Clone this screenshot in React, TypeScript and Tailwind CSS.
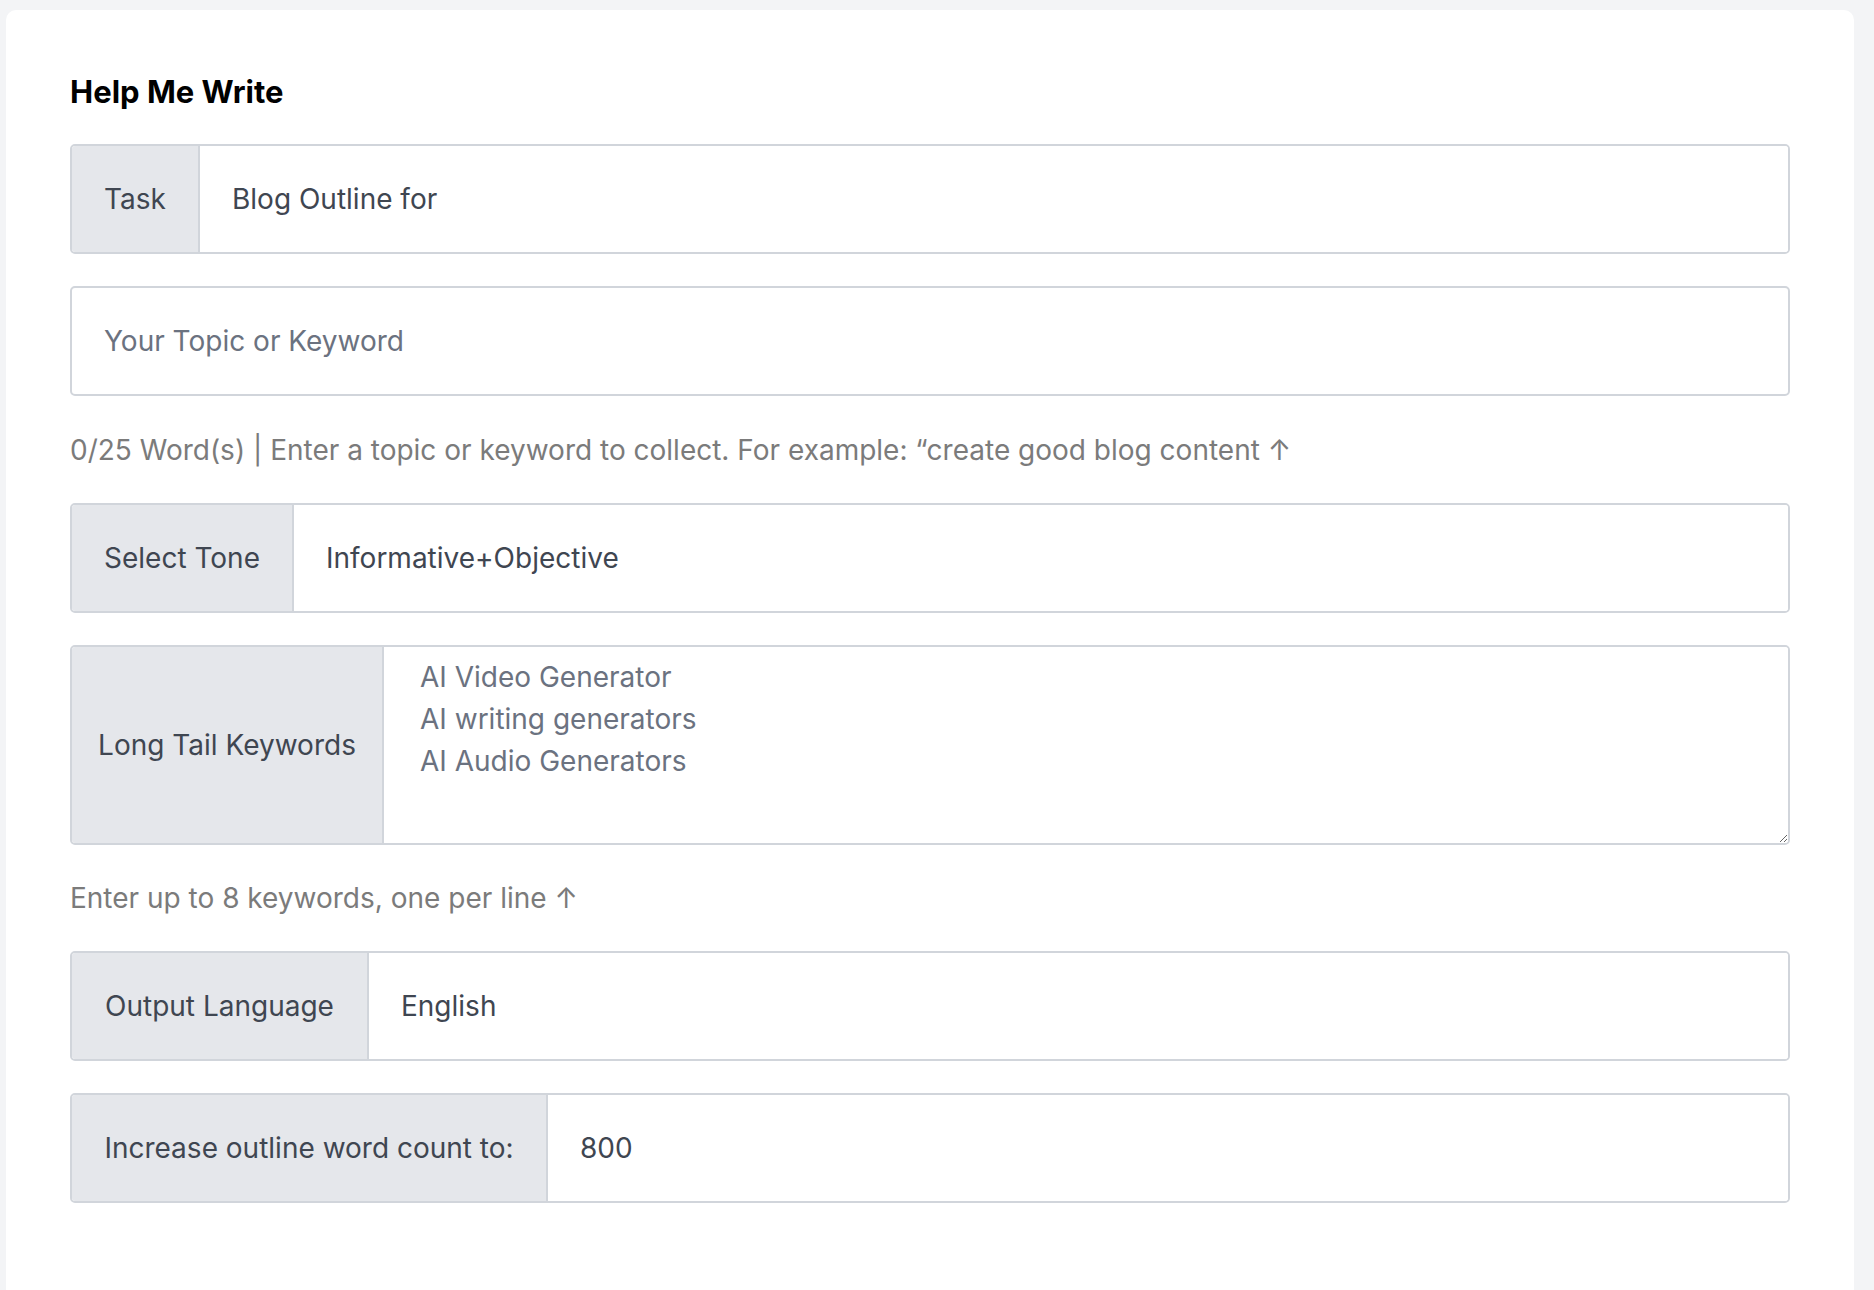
import { ReactNode } from "react";

const font = { fontFamily: "Inter, 'Noto Sans', sans-serif" };

function Row({
  label,
  labelWidth,
  children,
  tall,
}: {
  label: string;
  labelWidth: string;
  children: ReactNode;
  tall?: boolean;
}) {
  return (
    <div
      className={`flex rounded-[5px] border-2 border-[#d1d5db] overflow-hidden ${
        tall ? "h-[200px]" : "h-[110px]"
      }`}
    >
      <div
        className={`${labelWidth} shrink-0 flex items-center justify-center bg-[#e5e7eb] border-r-2 border-[#d1d5db] text-[28px] text-[#3f4651]`}
      >
        {label}
      </div>
      <div className="flex-1 flex bg-white">{children}</div>
    </div>
  );
}

export default function App() {
  return (
    <div className="min-h-screen bg-[#f3f4f6] pl-[6px] pr-[20px] pt-[10px]" style={font}>
      <div className="bg-white rounded-[10px] min-h-[1290px] px-[64px] pt-[64px]">
        <h1 className="text-[31px] font-bold text-black leading-[36px]">Help Me Write</h1>

        <div className="mt-[34px] flex flex-col">
          <Row label="Task" labelWidth="w-[128px]">
            <input
              className="flex-1 px-[32px] text-[28px] text-[#3f4651] outline-none"
              defaultValue="Blog Outline for"
            />
          </Row>

          <div className="mt-[32px] h-[110px] rounded-[5px] border-2 border-[#d1d5db] flex">
            <input
              className="flex-1 px-[32px] text-[28px] text-[#3f4651] placeholder:text-[#6b7280] outline-none rounded-[5px]"
              placeholder="Your Topic or Keyword"
            />
          </div>

          <p className="mt-[36px] text-[28px] text-[#7b7b7b] leading-[36px]">
            0/25 Word(s) | Enter a topic or keyword to collect. For example: “create good blog content ↑
          </p>

          <div className="mt-[35px]">
            <Row label="Select Tone" labelWidth="w-[222px]">
              <input
                className="flex-1 px-[32px] text-[28px] text-[#3f4651] outline-none"
                defaultValue="Informative+Objective"
              />
            </Row>
          </div>

          <div className="mt-[32px]">
            <Row label="Long Tail Keywords" labelWidth="w-[312px]" tall>
              <textarea
                className="flex-1 px-[36px] py-[9px] text-[28px] leading-[42px] text-[#3f4651] placeholder:text-[#6b7280] outline-none"
                placeholder={"AI Video Generator\nAI writing generators\nAI Audio Generators"}
              />
            </Row>
          </div>

          <p className="mt-[35px] text-[28px] text-[#7b7b7b] leading-[36px]">
            Enter up to 8 keywords, one per line ↑
          </p>

          <div className="mt-[35px]">
            <Row label="Output Language" labelWidth="w-[297px]">
              <input
                className="flex-1 px-[32px] text-[28px] text-[#3f4651] outline-none"
                defaultValue="English"
              />
            </Row>
          </div>

          <div className="mt-[32px]">
            <Row label="Increase outline word count to:" labelWidth="w-[476px]">
              <input
                className="flex-1 px-[32px] text-[28px] text-[#3f4651] outline-none"
                defaultValue="800"
              />
            </Row>
          </div>
        </div>
      </div>
    </div>
  );
}
